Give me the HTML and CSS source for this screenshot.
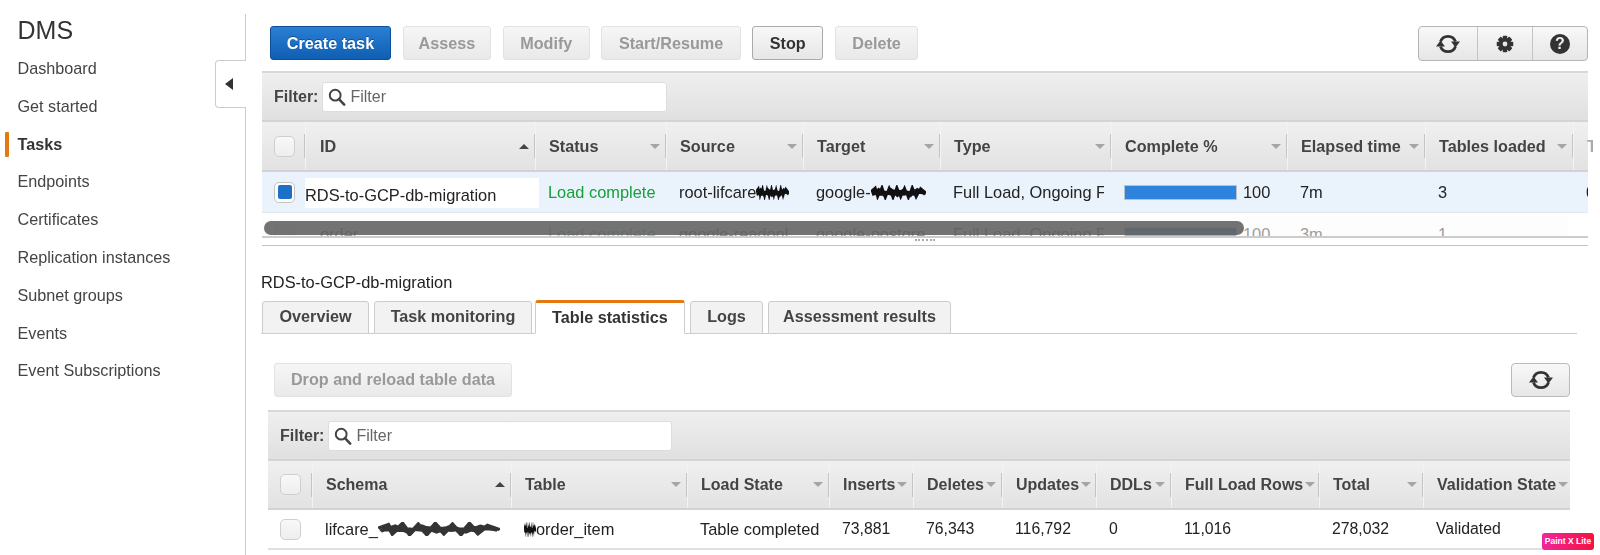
FILE: index.html
```html
<!DOCTYPE html>
<html lang="en">
<head>
<meta charset="utf-8">
<title>DMS Tasks</title>
<link rel="stylesheet" href="styles.css">
</head>
<body>
<svg class="defs" aria-hidden="true">
  <symbol id="i-refresh" viewBox="0 0 24 24">
    <path d="M4.5 9.5A8 8 0 0 1 19.5 9.5" fill="none" stroke="currentColor" stroke-width="2.8"/>
    <path d="M15 9.5H24L19.5 15.5Z" fill="currentColor"/>
    <path d="M19.5 14.5A8 8 0 0 1 4.5 14.5" fill="none" stroke="currentColor" stroke-width="2.8"/>
    <path d="M9 14.5H0L4.5 8.5Z" fill="currentColor"/>
  </symbol>
  <symbol id="i-search" viewBox="0 0 20 20">
    <circle cx="8" cy="8" r="6" fill="none" stroke="currentColor" stroke-width="2.2"/>
    <path d="M12.2 12.4 18 18.4" stroke="currentColor" stroke-width="2.8" stroke-linecap="round"/>
  </symbol>
  <symbol id="i-scribble" viewBox="0 0 100 20" preserveAspectRatio="none">
    <path d="M0 9 8 4 12 16 20 3 26 17 33 4 40 17 47 3 54 16 61 4 68 17 75 3 82 16 90 5 100 11M2 13 14 6 24 14 36 6 48 14 60 6 72 14 84 6 98 12M4 7 20 9 38 12 58 8 78 12 96 8M3 11 22 12 40 8 60 12 80 8 97 11" fill="none" stroke="#111" stroke-width="4.4"/>
  </symbol>
</svg>

<div class="page">
  <aside class="sidebar">
    <h1 class="brand">DMS</h1>
    <nav class="nav">
      <a class="nav-item">Dashboard</a>
      <a class="nav-item">Get started</a>
      <a class="nav-item nav-active">Tasks</a>
      <a class="nav-item">Endpoints</a>
      <a class="nav-item">Certificates</a>
      <a class="nav-item">Replication instances</a>
      <a class="nav-item">Subnet groups</a>
      <a class="nav-item">Events</a>
      <a class="nav-item">Event Subscriptions</a>
    </nav>
    <div class="collapse"><span class="collapse-arrow"></span></div>
  </aside>

  <main class="main">
    <section class="upper">
      <div class="toolbar">
        <div class="actions">
          <button class="btn btn-primary btn-create">Create task</button>
          <button class="btn btn-off btn-assess">Assess</button>
          <button class="btn btn-off">Modify</button>
          <button class="btn btn-off">Start/Resume</button>
          <button class="btn btn-on">Stop</button>
          <button class="btn btn-off">Delete</button>
        </div>
        <div class="icon-group">
          <button class="icon-btn icon-btn-a"><svg class="ico-refresh"><use href="#i-refresh"/></svg></button>
          <button class="icon-btn icon-btn-b">
            <svg class="ico-gear" viewBox="0 0 24 24">
              <g fill="#333">
                <rect x="9" y="1" width="6" height="22" rx="1"/>
                <rect x="9" y="1" width="6" height="22" rx="1" transform="rotate(45 12 12)"/>
                <rect x="9" y="1" width="6" height="22" rx="1" transform="rotate(90 12 12)"/>
                <rect x="9" y="1" width="6" height="22" rx="1" transform="rotate(135 12 12)"/>
                <circle cx="12" cy="12" r="8"/>
              </g>
              <circle cx="12" cy="12" r="3.2" fill="#e8e8e8"/>
            </svg>
          </button>
          <button class="icon-btn icon-btn-c"><span class="help">?</span></button>
        </div>
      </div>

      <div class="panel">
        <div class="filter-bar">
          <span class="filter-label">Filter:</span>
          <div class="filter-input filter-input-a"><svg class="ico-search"><use href="#i-search"/></svg><span>Filter</span></div>
        </div>
        <div class="grid grid-tasks thead">
          <div class="th th-check"><span class="check"></span></div>
          <div class="th th-id"><span>ID</span><i class="sort-up"></i></div>
          <div class="th"><span>Status</span><i class="sort"></i></div>
          <div class="th"><span>Source</span><i class="sort"></i></div>
          <div class="th"><span>Target</span><i class="sort"></i></div>
          <div class="th"><span>Type</span><i class="sort"></i></div>
          <div class="th"><span>Complete %</span><i class="sort"></i></div>
          <div class="th"><span>Elapsed time</span><i class="sort"></i></div>
          <div class="th"><span>Tables loaded</span><i class="sort"></i></div>
          <div class="th th-last"><span>T</span></div>
        </div>
        <div class="tbody-clip">
          <div class="grid grid-tasks row-selected">
            <div class="td td-check"><span class="check check-on"></span></div>
            <div class="td td-id">RDS-to-GCP-db-migration</div>
            <div class="td ok">Load complete</div>
            <div class="td">root-lifcare<svg class="scr scr-source"><use href="#i-scribble"/></svg></div>
            <div class="td">google-<svg class="scr scr-target"><use href="#i-scribble"/></svg></div>
            <div class="td td-trunc">Full Load, Ongoing F</div>
            <div class="td"><span class="bar"><span class="bar-fill"></span></span><span>100</span></div>
            <div class="td">7m</div>
            <div class="td">3</div>
            <div class="td td-last">0</div>
          </div>
          <div class="grid grid-tasks row-ghost">
            <div class="td td-check"><span class="check"></span></div>
            <div class="td td-order">order</div>
            <div class="td ok">Load complete</div>
            <div class="td td-trunc">google-readonl</div>
            <div class="td td-trunc">google-postgre</div>
            <div class="td td-trunc">Full Load, Ongoing F</div>
            <div class="td"><span class="bar bar-ghost"><span class="bar-fill"></span></span><span>100</span></div>
            <div class="td">3m</div>
            <div class="td">1</div>
            <div class="td td-last">0</div>
          </div>
          <div class="scrollbar"></div>
        </div>
        <div class="resizer"><span class="grip"></span></div>
      </div>
    </section>

    <section class="detail">
      <div class="detail-title">RDS-to-GCP-db-migration</div>
      <div class="tabs">
        <button class="tab tab-1">Overview</button>
        <button class="tab tab-2">Task monitoring</button>
        <button class="tab tab-active">Table statistics</button>
        <button class="tab tab-4">Logs</button>
        <button class="tab tab-5">Assessment results</button>
      </div>
      <div class="detail-body">
        <div class="detail-actions">
          <button class="btn btn-off btn-drop">Drop and reload table data</button>
          <button class="btn btn-on btn-refresh"><svg class="ico-refresh"><use href="#i-refresh"/></svg></button>
        </div>
        <div class="panel-lower">
          <div class="filter-bar">
            <span class="filter-label">Filter:</span>
            <div class="filter-input filter-input-b"><svg class="ico-search"><use href="#i-search"/></svg><span>Filter</span></div>
          </div>
          <div class="grid grid-stats thead thead-lower">
            <div class="th th-check"><span class="check"></span></div>
            <div class="th"><span>Schema</span><i class="sort-up"></i></div>
            <div class="th"><span>Table</span><i class="sort"></i></div>
            <div class="th"><span>Load State</span><i class="sort"></i></div>
            <div class="th"><span>Inserts</span><i class="sort"></i></div>
            <div class="th"><span>Deletes</span><i class="sort"></i></div>
            <div class="th"><span>Updates</span><i class="sort"></i></div>
            <div class="th"><span>DDLs</span><i class="sort"></i></div>
            <div class="th"><span>Full Load Rows</span><i class="sort"></i></div>
            <div class="th"><span>Total</span><i class="sort"></i></div>
            <div class="th th-end"><span>Validation State</span><i class="sort"></i></div>
          </div>
          <div class="grid grid-stats row-plain">
            <div class="td td-check"><span class="check"></span></div>
            <div class="td">lifcare_<svg class="scr scr-schema"><use href="#i-scribble"/></svg></div>
            <div class="td"><svg class="scr scr-table"><use href="#i-scribble"/></svg>order_item</div>
            <div class="td">Table completed</div>
            <div class="td td-num">73,881</div>
            <div class="td td-num">76,343</div>
            <div class="td td-num">116,792</div>
            <div class="td td-num">0</div>
            <div class="td td-num">11,016</div>
            <div class="td td-num">278,032</div>
            <div class="td td-num">Validated</div>
          </div>
        </div>
      </div>
    </section>
  </main>
</div>
<div class="paint-badge">Paint X Lite</div>
</body>
</html>
```

FILE: styles.css
```css
* { box-sizing: border-box; }
html, body { margin: 0; padding: 0; height: 555px; overflow: hidden; background: #fff; }
body {
  font-family: "Liberation Sans", Arial, sans-serif;
  font-size: 16.4px;
  color: #222;
  position: relative;
}
.defs { position: absolute; width: 0; height: 0; }
.page { display: flex; width: 1600px; height: 555px; filter: blur(.35px); }

/* Sidebar */
.sidebar {
  position: relative;
  width: 246px;
  flex: none;
  margin-top: 14px;
  border-right: 1px solid #ccc;
  padding-left: 17.5px;
}
.brand { margin: 1px 0 0; font-size: 25px; font-weight: 400; line-height: 30px; color: #333; }
.nav { display: flex; flex-direction: column; margin-top: 5px; }
.nav-item { height: 37.8px; line-height: 37.8px; color: #444; position: relative; font-size: 16.2px; }
.nav-active { font-weight: 700; color: #333; }
.nav-active::before {
  content: "";
  position: absolute;
  left: -12.5px;
  top: 6px;
  width: 4px;
  height: 25px;
  border-radius: 1px;
  background: #e47911;
}
.collapse {
  position: absolute;
  left: 215px;
  top: 46px;
  width: 31px;
  height: 48px;
  background: #fff;
  border: 1px solid #ccc;
  border-right: 0;
  border-radius: 4px 0 0 4px;
  display: flex;
  align-items: center;
  padding-left: 9px;
}
.collapse-arrow {
  width: 0; height: 0;
  border-top: 6.5px solid transparent;
  border-bottom: 6.5px solid transparent;
  border-right: 8px solid #333;
}

/* Main */
.main { flex: 1; min-width: 0; padding-right: 12px; }
.upper { padding: 26px 0 0 16px; }
.toolbar { display: flex; justify-content: space-between; align-items: flex-start; padding-left: 8px; height: 45px; }
.actions { display: flex; gap: 11.5px; }

.btn {
  height: 34px;
  padding: 0;
  border-radius: 3px;
  font: 700 16.2px "Liberation Sans", Arial, sans-serif;
  border: 1px solid #ddd;
}
.actions .btn { padding: 0 16.5px; }
.actions .btn-assess { padding: 0 15px; }
.actions .btn-create { padding: 0; width: 121px; }
.btn-primary {
  color: #fff;
  background: linear-gradient(#2a7fd4, #0f5fb2);
  border-color: #0b4f98;
  text-shadow: 0 -1px 0 #0b4f98;
}
.btn-off {
  color: #999;
  background: linear-gradient(#f6f6f6, #e9e9e9);
  border-color: #e2e2e2;
}
.btn-on {
  color: #333;
  background: linear-gradient(#f8f8f8, #e6e6e6);
  border-color: #aaa;
}
.icon-group {
  display: flex;
  height: 35px;
  border: 1px solid #b5b5b5;
  border-radius: 4px;
  overflow: hidden;
  background: linear-gradient(#f8f8f8, #e6e6e6);
}
.icon-btn {
  height: 100%;
  padding: 0;
  border: 0;
  background: none;
  display: flex;
  align-items: center;
  justify-content: center;
  color: #333;
}
.icon-btn-a { width: 59px; border-right: 1px solid #c4c4c4; }
.icon-btn-b { width: 55px; border-right: 1px solid #c4c4c4; }
.icon-btn-c { width: 54px; }
.ico-refresh { width: 24px; height: 24px; color: #333; }
.ico-gear { width: 18px; height: 18px; }
.help {
  width: 20px; height: 20px;
  border-radius: 50%;
  background: #333;
  color: #eee;
  font-weight: 700;
  font-size: 16px;
  line-height: 20px;
  text-align: center;
}

/* Panels */
.filter-bar {
  height: 51px;
  border-top: 2px solid #d8d8d8;
  border-bottom: 2px solid #d4d4d4;
  background: linear-gradient(#efefef, #e0e0e0);
  display: flex;
  align-items: center;
  padding-left: 12px;
  gap: 4px;
}
.filter-label { font-weight: 700; color: #444; font-size: 16px; }
.filter-input {
  height: 30px;
  background: #fff;
  border: 1px solid #ddd;
  border-radius: 3px;
  display: flex;
  align-items: center;
  gap: 4px;
  padding-left: 5px;
  color: #666;
  font-size: 16px;
}
.filter-input-a { width: 345px; }
.filter-input-b { width: 344px; }
.ico-search { width: 18px; height: 18px; color: #444; }

.grid { display: grid; }
.grid-tasks { grid-template-columns: 44px 230px 131px 137px 137px 171px 176px 138px 148px 1fr; }
.grid-stats { grid-template-columns: 45px 199px 176px 142px 84px 89px 94px 75px 148px 104px 146px; }

.thead {
  height: 50px;
  background: linear-gradient(#f0f0f0, #e2e2e2);
  border-bottom: 2px solid #d2d2d2;
  font-size: 16.2px;
}
.thead-lower { height: 49px; font-size: 16px; }
.th {
  display: flex;
  align-items: center;
  justify-content: space-between;
  gap: 2px;
  padding: 0 6px 0 13px;
  font-weight: 700;
  color: #444;
  white-space: nowrap;
  overflow: hidden;
  border-right: 1px solid #f3f3f3;
  background: linear-gradient(#c4c4c4, #c4c4c4) right center / 1px 24px no-repeat;
}
.th-check { padding: 0 0 0 12px; justify-content: flex-start; }
.th-id { padding-left: 14px; }
.th-last, .th-end { background: none; border-right: 0; }
.th-last span { color: #aaa; }
.sort, .sort-up { flex: none; width: 0; height: 0; border-left: 5px solid transparent; border-right: 5px solid transparent; }
.sort { border-top: 5px solid #a5a5a5; }
.sort-up { border-bottom: 5px solid #444; }

.check {
  display: flex;
  align-items: center;
  justify-content: center;
  width: 21px;
  height: 21px;
  border: 1px solid #cfcfcf;
  border-radius: 5px;
  background: linear-gradient(#f8f8f8, #eeeeee);
}
.check-on { background: #fff; border-color: #c4c4c4; }
.check-on::before { content: ""; width: 14px; height: 14px; border-radius: 2px; background: #1c70c8; }

.td {
  display: flex;
  align-items: center;
  min-width: 0;
  padding-left: 12px;
  white-space: nowrap;
  overflow: hidden;
  color: #222;
}
.td-num { font-size: 15.8px; }
.td-check { padding-left: 12px; }
.tbody-clip { position: relative; height: 66px; overflow: hidden; border-bottom: 2px solid #ccc; }
.row-selected { height: 41px; background: #eaf2fb; border-bottom: 1px solid #dfe8f2; }
.row-ghost { height: 34px; margin-top: 4px; margin-right: 20px; background: #fafafa; opacity: .45; }
.td-id { margin: 6px -3px 4px -1px; padding: 4px 0 0; background: #fff; }
.td-order { padding-left: 14px; }
.ok { color: #16a03c; }
.td-trunc { margin-right: 8px; }
.bar {
  display: block;
  width: 113px;
  height: 15px;
  margin-right: 6px;
  flex: none;
  border: 1px solid #b9c2cc;
  background: #fff;
}
.bar-fill { display: block; height: 100%; background: #2e83dd; }
.bar-ghost .bar-fill { background: #1c5fa8; }
.scrollbar {
  position: absolute;
  left: 2px;
  top: 49px;
  width: 980px;
  height: 14px;
  border-radius: 7px;
  background: rgba(90, 90, 90, .85);
}
.resizer { height: 8px; position: relative; border-bottom: 1px solid #c4c4c4; }
.grip {
  position: absolute;
  left: 653px;
  top: 1px;
  width: 20px;
  border-top: 2px dotted #aaa;
}

.scr { flex: none; display: block; }
.scr-source { width: 33px; height: 15px; }
.scr-target { width: 55px; height: 15px; }
.scr-schema { width: 122px; height: 14px; opacity: .85; }
.scr-table { width: 12px; height: 15px; }

/* Detail */
.detail { padding: 26px 11px 0 15px; }
.detail-title { height: 20px; line-height: 20px; color: #222; font-size: 16.4px; }
.tabs {
  display: flex;
  align-items: flex-end;
  height: 34px;
  margin-top: 8px;
  padding-left: 1px;
  border-bottom: 1px solid #ccc;
}
.tab {
  height: 33px;
  padding: 0 0 2px;
  margin-bottom: -1px;
  border: 1px solid #ccc;
  border-radius: 3px 3px 0 0;
  background: #f2f2f2;
  font: 700 16.2px "Liberation Sans", Arial, sans-serif;
  color: #444;
}
.tab-1 { width: 107px; margin-right: 5px; }
.tab-2 { width: 158px; margin-right: 3px; }
.tab-active {
  width: 150px;
  height: 34px;
  margin-right: 5px;
  background: #fff;
  border-top: 3px solid #e47911;
  border-bottom-color: #fff;
  color: #333;
}
.tab-4 { width: 73px; margin-right: 5px; }
.tab-5 { width: 183px; }

.detail-body { padding: 0 7px; }
.detail-actions {
  display: flex;
  justify-content: space-between;
  align-items: center;
  margin-top: 29px;
  margin-bottom: 13px;
  padding-left: 6px;
}
.btn-drop { width: 238px; padding-bottom: 2px; }
.btn-refresh {
  width: 59px;
  display: flex;
  align-items: center;
  justify-content: center;
  border-radius: 4px;
  border-color: #bbb;
}
.row-plain { height: 40px; border-bottom: 2px solid #e0e0e0; }

.paint-badge {
  position: absolute;
  left: 1542px;
  top: 533px;
  width: 52px;
  height: 17px;
  border-radius: 3px;
  background: linear-gradient(90deg, #f0269b, #f5123f);
  color: #fff;
  font-weight: 700;
  font-size: 8.5px;
  line-height: 17px;
  text-align: center;
  white-space: nowrap;
}
```
